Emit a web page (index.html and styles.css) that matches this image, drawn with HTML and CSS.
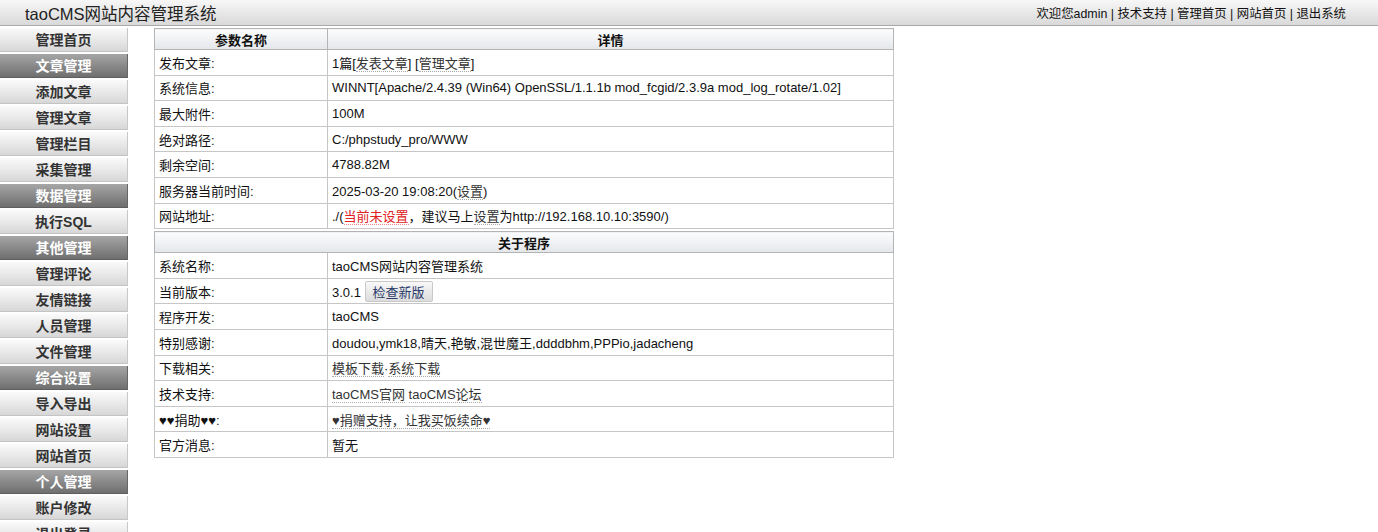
FILE: index.html
```html
<!DOCTYPE html>
<html lang="zh-CN">
<head>
  <meta charset="UTF-8">
  <title>taoCMS网站内容管理系统</title>
  <link rel="stylesheet" href="styles.css">
</head>
<body>

  <!-- 顶部 -->
  <div class="topbar">
    <div class="logo">taoCMS网站内容管理系统</div>
    <div class="toplinks">欢迎您admin | <a href="#">技术支持</a> | <a href="#">管理首页</a> | <a href="#">网站首页</a> | <a href="#">退出系统</a></div>
  </div>

  <div class="main">
    <!-- 左侧菜单 -->
    <div class="menu">
      <a href="#" class="item">管理首页</a>
      <div class="item group">文章管理</div>
      <a href="#" class="item">添加文章</a>
      <a href="#" class="item">管理文章</a>
      <a href="#" class="item">管理栏目</a>
      <a href="#" class="item">采集管理</a>
      <div class="item group">数据管理</div>
      <a href="#" class="item">执行SQL</a>
      <div class="item group">其他管理</div>
      <a href="#" class="item">管理评论</a>
      <a href="#" class="item">友情链接</a>
      <a href="#" class="item">人员管理</a>
      <a href="#" class="item">文件管理</a>
      <div class="item group">综合设置</div>
      <a href="#" class="item">导入导出</a>
      <a href="#" class="item">网站设置</a>
      <a href="#" class="item">网站首页</a>
      <div class="item group">个人管理</div>
      <a href="#" class="item">账户修改</a>
      <a href="#" class="item">退出登录</a>
    </div>

    <!-- 内容 -->
    <div class="content">
      <table class="info">
        <tr><th class="name">参数名称</th><th>详情</th></tr>
        <tr><td>发布文章:</td><td>1篇[<a href="#">发表文章</a>] [<a href="#">管理文章</a>]</td></tr>
        <tr><td>系统信息:</td><td>WINNT[Apache/2.4.39 (Win64) OpenSSL/1.1.1b mod_fcgid/2.3.9a mod_log_rotate/1.02]</td></tr>
        <tr><td>最大附件:</td><td>100M</td></tr>
        <tr><td>绝对路径:</td><td>C:/phpstudy_pro/WWW</td></tr>
        <tr><td>剩余空间:</td><td>4788.82M</td></tr>
        <tr><td>服务器当前时间:</td><td>2025-03-20 19:08:20(<a href="#">设置</a>)</td></tr>
        <tr><td>网站地址:</td><td>./(<a href="#" class="red">当前未设置</a>，建议马上<a href="#">设置</a>为http://192.168.10.10:3590/)</td></tr>
      </table>

      <table class="info">
        <tr><th colspan="2">关于程序</th></tr>
        <tr><td class="name">系统名称:</td><td>taoCMS网站内容管理系统</td></tr>
        <tr><td>当前版本:</td><td>3.0.1 <button class="check">检查新版</button></td></tr>
        <tr><td>程序开发:</td><td>taoCMS</td></tr>
        <tr><td>特别感谢:</td><td>doudou,ymk18,晴天,艳敏,混世魔王,ddddbhm,PPPio,jadacheng</td></tr>
        <tr><td>下载相关:</td><td><a href="#">模板下载</a>·<a href="#">系统下载</a></td></tr>
        <tr><td>技术支持:</td><td><a href="#">taoCMS官网</a> <a href="#">taoCMS论坛</a></td></tr>
        <tr><td>♥♥捐助♥♥:</td><td><a href="#">♥捐赠支持，让我买饭续命♥</a></td></tr>
        <tr><td>官方消息:</td><td>暂无</td></tr>
      </table>
    </div>
  </div>

</body>
</html>
```

FILE: styles.css
```css
/* 全局 */
* {
  margin: 0;
  padding: 0;
  box-sizing: border-box;
}

body {
  font-family: "Liberation Sans", "Noto Sans CJK SC", sans-serif;
  font-size: 13px;
  color: #111;
  background: #fff;
  height: 532px;
  overflow: hidden;
}

a {
  color: #333;
  text-decoration: none;
}

/* 顶部 */
.topbar {
  height: 26px;
  display: flex;
  justify-content: space-between;
  align-items: center;
  padding: 0 32px 0 25px;
  background: linear-gradient(#f7f7f7, #d9d9d9);
  border-bottom: 1px solid #a9a9a9;
}

.logo {
  font-size: 16.5px;
  color: #222;
}

.toplinks {
  font-size: 12.4px;
  color: #111;
}

.toplinks a {
  color: #111;
}

/* 主体 */
.main {
  display: flex;
  gap: 26px;
  padding-top: 2px;
}

.menu {
  width: 128px;
  display: flex;
  flex-direction: column;
  gap: 2px;
}

.menu .item {
  display: block;
  height: 24px;
  line-height: 24px;
  text-align: center;
  font-size: 14px;
  font-weight: bold;
  color: #333;
  background: linear-gradient(#fafafa, #e9e9e9 50%, #d7d7d7);
  border-right: 1px solid #c8c8c8;
  border-bottom: 1px solid #c4c4c4;
}

.menu .group {
  color: #fff;
  background: linear-gradient(#a6a6a6, #8a8a8a 50%, #6f6f6f);
  border-right: 1px solid #666;
  border-bottom: 1px solid #5e5e5e;
}

.content {
  display: flex;
  flex-direction: column;
  gap: 2px;
}

/* 信息表格 */
.info {
  width: 740px;
  border-collapse: collapse;
  border: 1px solid #a9a9a9;
}

.info th {
  height: 21px;
  font-weight: bold;
  font-size: 13px;
  color: #111;
  background: linear-gradient(#fbfcfd, #e4e7ea);
  border: 1px solid #b4b4b4;
  text-align: center;
}

.info td {
  height: 25.6px;
  padding: 0 4px;
  border: 1px solid #c6c6c6;
  color: #111;
}

.info .name {
  width: 173px;
}

.info td a {
  color: #333;
  border-bottom: 1px dotted #aaa;
}

.info td a.red {
  color: #e02020;
  border-bottom-color: #e88;
}

.check {
  font-family: "Liberation Sans", "Noto Sans CJK SC", sans-serif;
  font-size: 13px;
  color: #2a3a6a;
  height: 21px;
  padding: 0 7px;
  border: 1px solid #c9c9c9;
  border-radius: 2px;
  background: linear-gradient(#f8f8f8, #dcdcdc);
  vertical-align: baseline;
}
```
